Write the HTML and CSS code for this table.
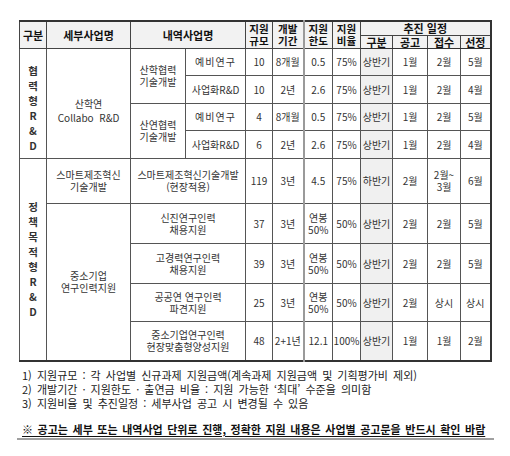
FILE: index.html
```html
<!DOCTYPE html>
<html lang="ko">
<head>
<meta charset="utf-8">
<link rel="stylesheet" href="styles.css">
</head>
<body>
<div class="page">
<table class="plan">
<colgroup>
<col class="c1"><col class="c2"><col class="c3"><col class="c4"><col class="c5"><col class="c6">
<col class="c7"><col class="c8"><col class="c9"><col class="c10"><col class="c11"><col class="c12">
</colgroup>
<thead>
<tr class="h1">
<th rowspan="2">구분</th>
<th rowspan="2">세부사업명</th>
<th rowspan="2" colspan="2">내역사업명</th>
<th rowspan="2" class="two">지원<br>규모</th>
<th rowspan="2" class="two">개발<br>기간</th>
<th rowspan="2" class="two l">지원<br>한도</th>
<th rowspan="2" class="two">지원<br>비율</th>
<th colspan="4">추진 일정</th>
</tr>
<tr class="h2"><th>구분</th><th>공고</th><th>접수</th><th>선정</th></tr>
</thead>
<tbody>
<tr class="r1">
<td rowspan="4" class="vert"><div class="stack first"><span>협</span><span>력</span><span>형</span><span>R</span><span>&amp;</span><span>D</span></div></td>
<td rowspan="4" class="biz"><div class="lower">산학연<br>Collabo&nbsp; R&amp;D</div></td>
<td rowspan="2">산학협력<br>기술개발</td>
<td class="sp">예비연구</td>
<td>10</td><td>8개월</td><td class="l">0.5</td><td>75%</td><td class="h">상반기</td><td>1월</td><td>2월</td><td>5월</td>
</tr>
<tr class="r2">
<td>사업화R&amp;D</td>
<td>10</td><td>2년</td><td class="l">2.6</td><td>75%</td><td class="h">상반기</td><td>1월</td><td>2월</td><td>4월</td>
</tr>
<tr class="r3">
<td rowspan="2">산연협력<br>기술개발</td>
<td class="sp">예비연구</td>
<td>4</td><td>8개월</td><td class="l">0.5</td><td>75%</td><td class="h">상반기</td><td>1월</td><td>2월</td><td>5월</td>
</tr>
<tr class="r4">
<td>사업화R&amp;D</td>
<td>6</td><td>2년</td><td class="l">2.6</td><td>75%</td><td class="h">상반기</td><td>1월</td><td>2월</td><td>4월</td>
</tr>
<tr class="r5">
<td rowspan="5" class="vert"><div class="stack"><span>정</span><span>책</span><span>목</span><span>적</span><span>형</span><span>R</span><span>&amp;</span><span>D</span></div></td>
<td>스마트제조혁신<br>기술개발</td>
<td colspan="2">스마트제조혁신기술개발<br>(현장적용)</td>
<td>119</td><td>3년</td><td class="l">4.5</td><td>75%</td><td class="h">하반기</td><td>2월</td><td>2월~<br>3월</td><td>6월</td>
</tr>
<tr class="r6">
<td rowspan="4">중소기업<br>연구인력지원</td>
<td colspan="2">신진연구인력<br>채용지원</td>
<td>37</td><td>3년</td><td class="l">연봉<br>50%</td><td>50%</td><td class="h">상반기</td><td>2월</td><td>2월</td><td>5월</td>
</tr>
<tr class="r7">
<td colspan="2">고경력연구인력<br>채용지원</td>
<td>39</td><td>3년</td><td class="l">연봉<br>50%</td><td>50%</td><td class="h">상반기</td><td>2월</td><td>2월</td><td>5월</td>
</tr>
<tr class="r8">
<td colspan="2">공공연 연구인력<br>파견지원</td>
<td>25</td><td>3년</td><td class="l">연봉<br>50%</td><td>50%</td><td class="h">상반기</td><td>2월</td><td>상시</td><td>상시</td>
</tr>
<tr class="r9">
<td colspan="2">중소기업연구인력<br>현장맞춤형양성지원</td>
<td>48</td><td>2+1년</td><td class="l">12.1</td><td>100%</td><td class="h">상반기</td><td>1월</td><td>1월</td><td>2월</td>
</tr>
</tbody>
</table>
<div class="notes">
<p>1) 지원규모 : 각 사업별 신규과제 지원금액(계속과제 지원금액 및 기획평가비 제외)</p>
<p>2) 개발기간 · 지원한도 · 출연금 비율 : 지원 가능한 ‘최대’ 수준을 의미함</p>
<p>3) 지원비율 및 추진일정 : 세부사업 공고 시 변경될 수 있음</p>
</div>
<div class="warn"><span>※ 공고는 세부 또는 내역사업 단위로 진행, 정확한 지원 내용은 사업별 공고문을 반드시 확인 바람</span></div>
</div>
</body>
</html>
```
FILE: styles.css
```css
html, body {
  margin: 0;
  padding: 0;
  background: #ffffff;
}
body {
  font-family: "Noto Sans CJK KR", "Noto Sans", sans-serif;
  color: #2a2a2a;
}
.page {
  padding: 20px 0 0 19px;
  width: 472px;
}
.plan {
  border-collapse: collapse;
  table-layout: fixed;
  width: 472px;
  border-top: 2px solid #333;
  border-bottom: 2px solid #333;
  border-right: 2px solid #333;
  border-left: 1px solid #333;
}
.c1 { width: 27px; }
.c2 { width: 84px; }
.c3 { width: 55px; }
.c4 { width: 60px; }
.c5 { width: 27px; }
.c6 { width: 31px; }
.c7 { width: 29px; }
.c8 { width: 28px; }
.c9 { width: 32px; }
.c10 { width: 35px; }
.c11 { width: 33px; }
.c12 { width: 30px; }
.plan th {
  background: #f2f2f2;
  color: #111;
  font-weight: bold;
  font-size: 11px;
  line-height: 12.5px;
  padding: 0;
  border: 1px solid #444;
  text-align: center;
  vertical-align: middle;
  overflow: hidden;
  white-space: nowrap;
}
.plan th.two { font-size: 10.5px; }
.plan thead tr.h1 { height: 13px; }
.plan thead tr.h2 { height: 12px; }
.plan thead tr.h2 th { border-bottom: 1px solid #333; }
.plan td {
  font-size: 10px;
  line-height: 12px;
  padding: 0;
  border: 1px solid #555;
  text-align: center;
  vertical-align: middle;
  white-space: nowrap;
  color: #333;
}
.plan .l { border-left: 2px solid #9a9a9a; }
.plan td.h { background: #f0f0f0; }
.plan td.sp { letter-spacing: 1px; }
.r1 { height: 27px; }
.r2 { height: 28px; }
.r3 { height: 27px; }
.r4 { height: 28px; }
.r5 { height: 45px; }
.r6 { height: 40px; }
.r7 { height: 40px; }
.r8 { height: 38px; }
.r9 { height: 39px; }
.vert { font-weight: bold; color: #222; }
.stack {
  display: flex;
  flex-direction: column;
  align-items: center;
  font-size: 10.5px;
  line-height: 15px;
}
.stack.first { padding-top: 8px; }
.lower { padding-top: 14px; line-height: 14px; }
.notes {
  margin-top: 6px;
  padding-left: 3px;
  font-size: 11px;
  line-height: 14px;
  color: #222;
  word-spacing: 2px;
}
.notes p { margin: 0; }
.warn {
  margin-top: 13px;
  margin-left: -2px;
  width: 472px;
  padding: 0 0 2px 5px;
  border-bottom: 2px solid #a0a0a0;
  font-size: 11px;
  font-weight: bold;
  line-height: 13px;
  color: #111;
  white-space: nowrap;
  word-spacing: 1.5px;
}
.warn span { text-decoration: underline; text-underline-offset: 2px; }
```
